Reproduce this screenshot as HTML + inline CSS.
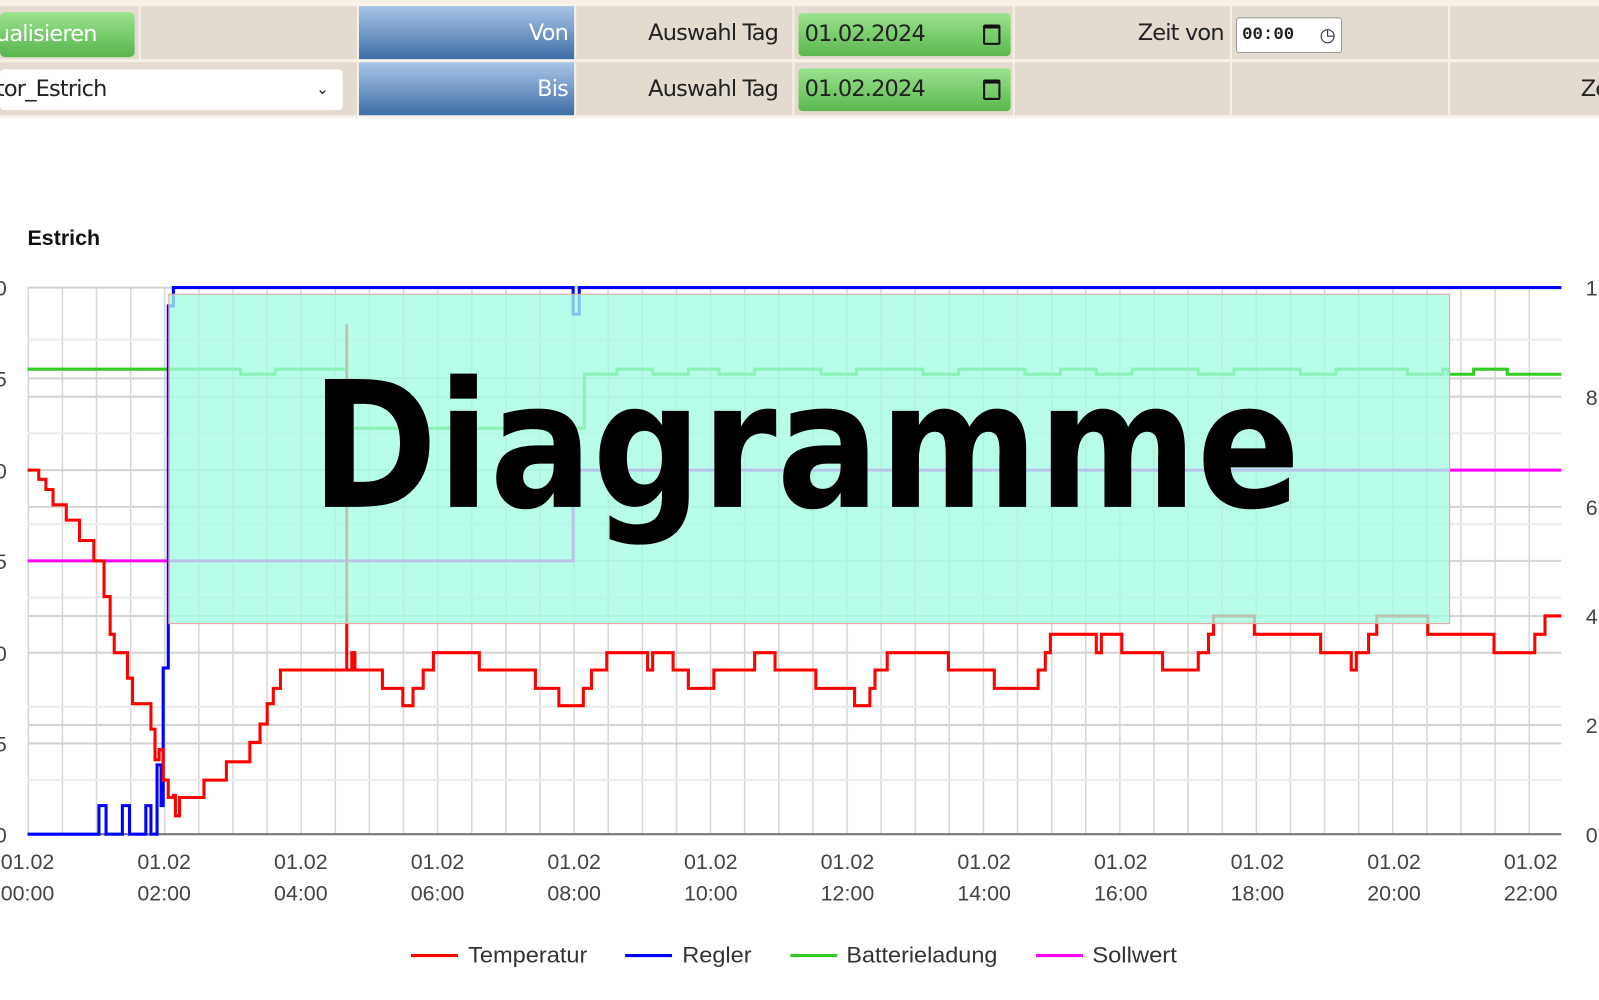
<!DOCTYPE html>
<html><head><meta charset="utf-8"><style>
body{margin:0;width:1599px;height:1000px;overflow:hidden;background:#fff;font-family:"Liberation Sans",sans-serif;position:relative}
#wrap{position:absolute;left:0;top:0;width:1568px;height:981px;transform:scale(1.0198);transform-origin:0 0}
.hdr{position:absolute;left:0;top:0;width:1599px;height:116px;background:#f7f1e8}
.c{position:absolute;background:#e3dbcf;box-sizing:border-box;font-family:"DejaVu Sans","Liberation Sans",sans-serif;font-size:22px;color:#222;display:flex;align-items:center;justify-content:flex-end;padding-right:14px;letter-spacing:-0.8px}
.blue{background:linear-gradient(#a8c6e6,#3e6ea6);color:#fff;padding-right:6px}
.btn{position:absolute;left:0;top:12px;width:132px;height:44px;border-radius:5px;background:linear-gradient(#9ae28e,#58b54c);color:#fff;font-family:"DejaVu Sans",sans-serif;font-size:22px;line-height:44px;text-indent:-4px;letter-spacing:-0.8px}
.sel{position:absolute;left:0;top:68px;width:336px;height:40px;background:#fff;border-radius:4px;font-family:"DejaVu Sans",sans-serif;font-size:22px;line-height:40px;color:#222;text-indent:-4px;letter-spacing:-0.8px}
.date{position:absolute;left:783px;width:208px;height:42px;border-radius:4px;background:linear-gradient(#9ae28e,#5cb84f);font-family:"DejaVu Sans",sans-serif;font-size:22px;line-height:42px;color:#222;text-indent:6px;letter-spacing:-0.8px}
.cal{position:absolute;right:10px;top:11px;width:13px;height:14px;border:2px solid #111;border-top-width:4px;border-radius:2px}
.time{position:absolute;left:1212px;top:17px;width:102px;height:33px;background:#fff;border:1px solid #999;border-radius:3px;font-family:"Liberation Mono",monospace;font-size:17px;font-weight:bold;line-height:33px;text-indent:5px;color:#222}
</style></head><body>
<div id="wrap">
<div class="hdr">
<div class="c" style="left:0;top:6px;width:136px;height:52px"></div>
<div class="c" style="left:138px;top:6px;width:212px;height:52px"></div>
<div class="c blue" style="left:352px;top:6px;width:211px;height:52px">Von</div>
<div class="c" style="left:565px;top:6px;width:212px;height:52px">Auswahl Tag</div>
<div class="c" style="left:779px;top:6px;width:214px;height:52px"></div>
<div class="c" style="left:995px;top:6px;width:211px;height:52px;padding-right:6px">Zeit von</div>
<div class="c" style="left:1208px;top:6px;width:212px;height:52px"></div>
<div class="c" style="left:1422px;top:6px;width:177px;height:52px"></div>
<div class="c" style="left:0;top:61px;width:350px;height:52px"></div>
<div class="c blue" style="left:352px;top:61px;width:211px;height:52px">Bis</div>
<div class="c" style="left:565px;top:61px;width:212px;height:52px">Auswahl Tag</div>
<div class="c" style="left:779px;top:61px;width:214px;height:52px"></div>
<div class="c" style="left:995px;top:61px;width:211px;height:52px"></div>
<div class="c" style="left:1208px;top:61px;width:212px;height:52px"></div>
<div class="c" style="left:1422px;top:61px;width:177px;height:52px;justify-content:flex-start;padding-left:128px">Ze</div>
<div class="btn">ualisieren</div>
<div class="sel">tor_Estrich<span style="position:absolute;left:314px;top:-1px;font-size:15px">&#8964;</span></div>
<div class="date" style="top:13px">01.02.2024<div class="cal"></div></div>
<div class="date" style="top:67px">01.02.2024<div class="cal"></div></div>
<div class="time">00:00 <span style="position:absolute;left:76px;top:0;font-family:'DejaVu Sans';font-weight:normal;font-size:18px">&#9719;</span></div>
</div>
<svg width="1568" height="981" style="position:absolute;left:0;top:0" xmlns="http://www.w3.org/2000/svg">
<defs><pattern id="vg" x="27" y="0" width="33.45" height="1000" patternUnits="userSpaceOnUse"><line x1="0.5" y1="0" x2="0.5" y2="1000" stroke="#d6d6d6" stroke-width="2"/></pattern></defs>
<text x="27" y="240" font-family="Liberation Sans" font-weight="bold" font-size="21" fill="#111">Estrich</text>
<rect x="27" y="282" width="1505" height="536" fill="url(#vg)"/>
<g stroke="#ececec" stroke-width="2">
<line x1="27" y1="333" x2="1531" y2="333"/><line x1="27" y1="425" x2="1531" y2="425"/><line x1="27" y1="514" x2="1531" y2="514"/><line x1="27" y1="586" x2="1531" y2="586"/><line x1="27" y1="693" x2="1531" y2="693"/><line x1="27" y1="765" x2="1531" y2="765"/>
</g>
<g stroke="#d4d4d4" stroke-width="2">
<line x1="27" y1="282" x2="1531" y2="282"/><line x1="27" y1="371" x2="1531" y2="371"/><line x1="27" y1="389" x2="1531" y2="389"/><line x1="27" y1="461" x2="1531" y2="461"/><line x1="27" y1="497" x2="1531" y2="497"/><line x1="27" y1="550" x2="1531" y2="550"/><line x1="27" y1="604" x2="1531" y2="604"/><line x1="27" y1="640" x2="1531" y2="640"/><line x1="27" y1="711" x2="1531" y2="711"/><line x1="27" y1="729" x2="1531" y2="729"/>
</g>
<line x1="27" y1="818" x2="1531" y2="818" stroke="#777" stroke-width="2"/>
<g fill="none" stroke-width="3">
<path stroke="#ff00ff" d="M27 550H562V461H1531"/>
<path stroke="#33cc22" d="M27 362H236V367H270V362H340V420H573V367H605V362H640V367H675V362H705V367H740V362H805V367H840V362H905V367H940V362H1005V367H1040V362H1075V367H1110V362H1175V367H1210V362H1275V367H1310V362H1380V367H1415V362H1420V367H1445V362H1478V367H1531"/>
<path stroke="#0000ff" d="M27 818H97V790H104V818H120V790H127V818H143V790H148V818H154V750H158V790H160V655H165V300H170V282H562V308H568V282H1531"/>
<path stroke="#ff0000" d="M27 461H38V470H45V480H52V495H65V510H78V530H92V550H102V585H108V622H112V640H125V665H130V690H148V715H152V745H156V735H160V765H165V782H170V780H172V800H176V782H200V765H222V747H245V728H255V710H262V690H268V675H275V657H340V318V640V657H345V640H348V657H375V675H395V692H405V675H415V657H425V640H470V657H525V675H548V692H572V675H580V657H595V640H635V657H640V640H660V657H675V675H700V657H740V640H760V657H800V675H838V692H853V675H858V657H870V640H930V657H975V675H1018V657H1025V640H1030V622H1075V640H1080V622H1100V640H1140V657H1175V640H1185V622H1190V604H1230V622H1295V640H1325V657H1330V640H1342V622H1350V604H1400V622H1465V640H1505V622H1515V604H1531"/>
</g>
<rect x="165.5" y="288.5" width="1256" height="323" fill="#a4fce3" fill-opacity="0.78" stroke="#f0a0a0" stroke-width="1"/>
<text x="305" y="497" font-family="DejaVu Sans" font-weight="bold" font-size="172" fill="#000" textLength="970" lengthAdjust="spacingAndGlyphs">Diagramme</text>
<g font-family="Liberation Sans" font-size="21" fill="#444">
<text x="-5" y="290">0</text><text x="-5" y="379">5</text><text x="-5" y="469">0</text><text x="-5" y="558">5</text><text x="-5" y="648">0</text><text x="-5" y="737">5</text><text x="-5" y="826">0</text>
<text x="1555" y="290">1</text><text x="1555" y="397">8</text><text x="1555" y="505">6</text><text x="1555" y="612">4</text><text x="1555" y="719">2</text><text x="1555" y="826">0</text>
</g>
<g font-family="Liberation Sans" font-size="21" fill="#444" text-anchor="middle">
<text x="27" y="852">01.02</text><text x="27" y="883">00:00</text>
<text x="161" y="852">01.02</text><text x="161" y="883">02:00</text>
<text x="295" y="852">01.02</text><text x="295" y="883">04:00</text>
<text x="429" y="852">01.02</text><text x="429" y="883">06:00</text>
<text x="563" y="852">01.02</text><text x="563" y="883">08:00</text>
<text x="697" y="852">01.02</text><text x="697" y="883">10:00</text>
<text x="831" y="852">01.02</text><text x="831" y="883">12:00</text>
<text x="965" y="852">01.02</text><text x="965" y="883">14:00</text>
<text x="1099" y="852">01.02</text><text x="1099" y="883">16:00</text>
<text x="1233" y="852">01.02</text><text x="1233" y="883">18:00</text>
<text x="1367" y="852">01.02</text><text x="1367" y="883">20:00</text>
<text x="1501" y="852">01.02</text><text x="1501" y="883">22:00</text>
</g>
<g stroke-width="3"><line x1="403" y1="937" x2="449" y2="937" stroke="#ff0000"/><line x1="613" y1="937" x2="659" y2="937" stroke="#0000ff"/><line x1="775" y1="937" x2="821" y2="937" stroke="#33cc22"/><line x1="1016" y1="937" x2="1062" y2="937" stroke="#ff00ff"/></g>
<g font-family="Liberation Sans" font-size="22" fill="#333">
<text x="459" y="944" textLength="117" lengthAdjust="spacingAndGlyphs">Temperatur</text>
<text x="669" y="944" textLength="68" lengthAdjust="spacingAndGlyphs">Regler</text>
<text x="830" y="944" textLength="148" lengthAdjust="spacingAndGlyphs">Batterieladung</text>
<text x="1071" y="944" textLength="83" lengthAdjust="spacingAndGlyphs">Sollwert</text>
</g>
</svg>
</div>
</body></html>
